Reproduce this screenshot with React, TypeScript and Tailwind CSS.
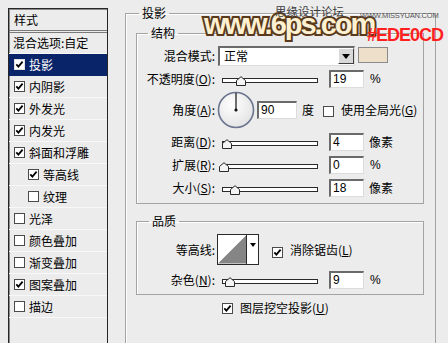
import React from "react";

const Check = ({ checked, sel }: { checked: boolean; sel?: boolean }) => (
  <span
    className={
      "inline-flex w-[11px] h-[11px] bg-white border items-center justify-center shrink-0 " +
      (sel ? "border-[#e0e0e0]" : "border-[#4a4a4a]")
    }
  >
    {checked && (
      <svg width="9" height="9" viewBox="0 0 9 9">
        <path d="M1.3 4.3 L3.4 6.6 L7.6 1.6" stroke="#000" strokeWidth="1.8" fill="none" />
      </svg>
    )}
  </span>
);

const Field = ({ v, w = 35 }: { v: string; w?: number }) => (
  <div
    className="h-[18px] bg-white border-t-2 border-l-2 border-b border-r border-t-[#6a6a6a] border-l-[#6a6a6a] border-b-[#dcdcdc] border-r-[#dcdcdc] pl-[2px] text-[12px] leading-[15px] font-['Liberation_Sans',sans-serif] text-black"
    style={{ width: w }}
  >
    {v}
  </div>
);

const Slider = ({ pos }: { pos: number }) => (
  <div className="relative w-[96px] h-[18px] flex items-center">
    <div className="w-[96px] h-[5px] border border-[#2a2a2a] bg-white mt-[3px]" />
    <svg
      className="absolute"
      style={{ left: pos, top: 6 }}
      width="10"
      height="10"
      viewBox="0 0 10 10"
    >
      <path d="M0.5 9.5 L0.5 4.5 L5 0.7 L9.5 4.5 L9.5 9.5 Z" fill="#f4f4f4" stroke="#2a2a2a" strokeWidth="1" />
    </svg>
  </div>
);

const Label = ({ children }: { children: React.ReactNode }) => (
  <div className="w-[78px] text-right text-[12px] leading-[16px] whitespace-nowrap">{children}</div>
);

const items: { t: string; c: boolean; sel?: boolean; sub?: boolean }[] = [
  { t: "投影", c: true, sel: true },
  { t: "内阴影", c: true },
  { t: "外发光", c: true },
  { t: "内发光", c: true },
  { t: "斜面和浮雕", c: true },
  { t: "等高线", c: true, sub: true },
  { t: "纹理", c: false, sub: true },
  { t: "光泽", c: false },
  { t: "颜色叠加", c: false },
  { t: "渐变叠加", c: false },
  { t: "图案叠加", c: true },
  { t: "描边", c: false },
];

export default function App() {
  return (
    <div className="relative w-[448px] h-[343px] overflow-hidden bg-[#ececec] text-black font-['Noto_Sans_CJK_SC','Noto_Sans',sans-serif] flex items-start">
      {/* Left styles panel */}
      <div className="ml-[8px] mt-[8px] w-[100px] h-[345px] border border-[#262626] shadow-[inset_1px_1px_0_#8a8a8a] flex flex-col shrink-0">
        <div className="h-[21px] pl-[5px] text-[12px] leading-[21px]">样式</div>
        <div className="h-[3px] border-y border-[#7a7a7a]" />
        <div className="h-[21px] pl-[4px] text-[12px] leading-[20px] border-b border-[#f8f8f8] whitespace-nowrap">
          混合选项:自定
        </div>
        {items.map((it) => (
          <div
            key={it.t}
            className={
              "h-[22px] flex items-center gap-[3px] text-[12px] border-b whitespace-nowrap " +
              (it.sel ? "bg-[#0a246a] text-white border-[#0a246a] " : "border-[#f8f8f8] ") +
              (it.sub ? "pl-[19px]" : "pl-[5px]")
            }
          >
            <Check checked={it.c} sel={it.sel} />
            <span className="ml-[1px]">{it.t}</span>
          </div>
        ))}
      </div>

      {/* Right: 投影 group */}
      <fieldset className="ml-[17px] mt-[5px] w-[311px] h-[350px] border border-[#a3a3a3] shadow-[inset_1px_1px_0_#fff] shrink-0">
        <legend className="ml-[13px] px-[3px] text-[12px] leading-[16px]">投影</legend>

        {/* 结构 */}
        <fieldset className="ml-[10px] mt-[4px] w-[288px] border border-[#a3a3a3] shadow-[inset_1px_1px_0_#fff] pb-[6px]">
          <legend className="ml-[11px] px-[3px] text-[12px] leading-[16px]">结构</legend>

          <div className="flex items-start mt-[5px]">
            <div className="h-[20px] flex items-center">
              <Label>混合模式:</Label>
            </div>
            <div className="ml-[3px] w-[137px] h-[20px] bg-white border-t-2 border-l-2 border-b border-r border-t-[#6a6a6a] border-l-[#6a6a6a] border-b-[#dcdcdc] border-r-[#dcdcdc] flex">
              <div className="flex-1 pl-[4px] text-[12px] leading-[16px]">正常</div>
              <div className="w-[16px] h-[16px] bg-[#d8d8d8] border border-t-white border-l-white border-b-[#404040] border-r-[#404040] flex items-center justify-center">
                <svg width="8" height="5" viewBox="0 0 8 5">
                  <path d="M0 0 H8 L4 5 Z" fill="#000" />
                </svg>
              </div>
            </div>
            <div className="ml-[3px] mt-[1px] w-[30px] h-[16px] bg-[#eedfcb] border border-[#8a8a8a]" />
          </div>

          <div className="flex items-center mt-[4px] h-[18px]">
            <Label>
              不透明度(<u>O</u>):
            </Label>
            <div className="ml-[7px]">
              <Slider pos={14} />
            </div>
            <div className="ml-[11px]">
              <Field v="19" />
            </div>
            <span className="ml-[6px] text-[12px] font-['Liberation_Sans',sans-serif]">%</span>
          </div>

          <div className="flex items-center mt-[3px] h-[38px]">
            <Label>
              角度(<u>A</u>):
            </Label>
            <svg className="ml-[2px]" width="38" height="38" viewBox="0 0 38 38">
              <defs>
                <radialGradient id="dialg" cx="40%" cy="35%" r="70%">
                  <stop offset="0%" stopColor="#ffffff" />
                  <stop offset="100%" stopColor="#e2e2e2" />
                </radialGradient>
              </defs>
              <circle cx="19" cy="19" r="17.5" fill="url(#dialg)" stroke="#6b7590" strokeWidth="1.6" />
              <line x1="19" y1="19" x2="19" y2="2" stroke="#111" strokeWidth="1.2" />
              <circle cx="19" cy="19" r="1.6" fill="#111" />
            </svg>
            <div className="ml-[2px]">
              <Field v="90" w={40} />
            </div>
            <span className="ml-[5px] text-[12px]">度</span>
            <div className="ml-[9px]">
              <Check checked={false} />
            </div>
            <span className="ml-[7px] text-[12px] whitespace-nowrap">
              使用全局光(<u>G</u>)
            </span>
          </div>

          <div className="flex items-center mt-[4px] h-[18px]">
            <Label>
              距离(<u>D</u>):
            </Label>
            <div className="ml-[7px]">
              <Slider pos={0} />
            </div>
            <div className="ml-[11px]">
              <Field v="4" />
            </div>
            <span className="ml-[5px] text-[12px]">像素</span>
          </div>

          <div className="flex items-center mt-[5px] h-[18px]">
            <Label>
              扩展(<u>R</u>):
            </Label>
            <div className="ml-[7px]">
              <Slider pos={-3} />
            </div>
            <div className="ml-[11px]">
              <Field v="0" />
            </div>
            <span className="ml-[6px] text-[12px] font-['Liberation_Sans',sans-serif]">%</span>
          </div>

          <div className="flex items-center mt-[5px] h-[18px]">
            <Label>
              大小(<u>S</u>):
            </Label>
            <div className="ml-[7px]">
              <Slider pos={8} />
            </div>
            <div className="ml-[11px]">
              <Field v="18" />
            </div>
            <span className="ml-[5px] text-[12px]">像素</span>
          </div>
        </fieldset>

        {/* 品质 */}
        <fieldset className="ml-[10px] mt-[9px] w-[288px] border border-[#a3a3a3] shadow-[inset_1px_1px_0_#fff] pb-[5px]">
          <legend className="ml-[12px] px-[3px] text-[12px] leading-[16px]">品质</legend>

          <div className="flex items-center mt-[5px] h-[31px]">
            <Label>等高线:</Label>
            <div className="ml-[2px] w-[42px] h-[31px] border border-[#2a2a2a] bg-white flex">
              <svg width="29" height="29" viewBox="0 0 29 29" className="border-r border-[#2a2a2a]">
                <path d="M0 29 L29 0 L29 29 Z" fill="#858585" />
              </svg>
              <div className="flex-1 flex justify-center pt-[8px]">
                <svg width="6" height="4" viewBox="0 0 6 4">
                  <path d="M0 0 H6 L3 4 Z" fill="#000" />
                </svg>
              </div>
            </div>
            <div className="ml-[13px]">
              <Check checked={true} />
            </div>
            <span className="ml-[7px] text-[12px] whitespace-nowrap">
              消除锯齿(<u>L</u>)
            </span>
          </div>

          <div className="flex items-center mt-[6px] h-[18px]">
            <Label>
              杂色(<u>N</u>):
            </Label>
            <div className="ml-[7px]">
              <Slider pos={3} />
            </div>
            <div className="ml-[11px]">
              <Field v="9" />
            </div>
            <span className="ml-[6px] text-[12px] font-['Liberation_Sans',sans-serif]">%</span>
          </div>
        </fieldset>

        <div className="flex items-center mt-[5px] h-[16px] pl-[96px]">
          <Check checked={true} />
          <span className="ml-[7px] text-[12px] whitespace-nowrap">
            图层挖空投影(<u>U</u>)
          </span>
        </div>
      </fieldset>

      {/* Watermark overlay */}
      <div className="absolute left-[204px] top-[9px] text-[29px] leading-[30px] font-bold tracking-[-2px] font-['Liberation_Sans',sans-serif] text-[#fdf1d2] [-webkit-text-stroke:4px_#5a3a1c] [paint-order:stroke_fill] whitespace-nowrap">
        www.6ps.com
      </div>
      <div className="absolute left-[275px] top-[4px] text-[11.5px] leading-[14px] text-[#3a3a3a] whitespace-nowrap">
        思缘设计论坛
      </div>
      <div className="absolute left-[360px] top-[11px] text-[7.5px] leading-[9px] tracking-[-0.2px] text-[#555] font-['Liberation_Sans',sans-serif] whitespace-nowrap">
        WWW.MISSYUAN.COM
      </div>
      <div className="absolute left-[367px] top-[26px] text-[18px] leading-[18px] font-bold tracking-[-1px] text-[#ff1f1f] font-['Liberation_Sans',sans-serif] whitespace-nowrap">
        #EDE0CD
      </div>
    </div>
  );
}
